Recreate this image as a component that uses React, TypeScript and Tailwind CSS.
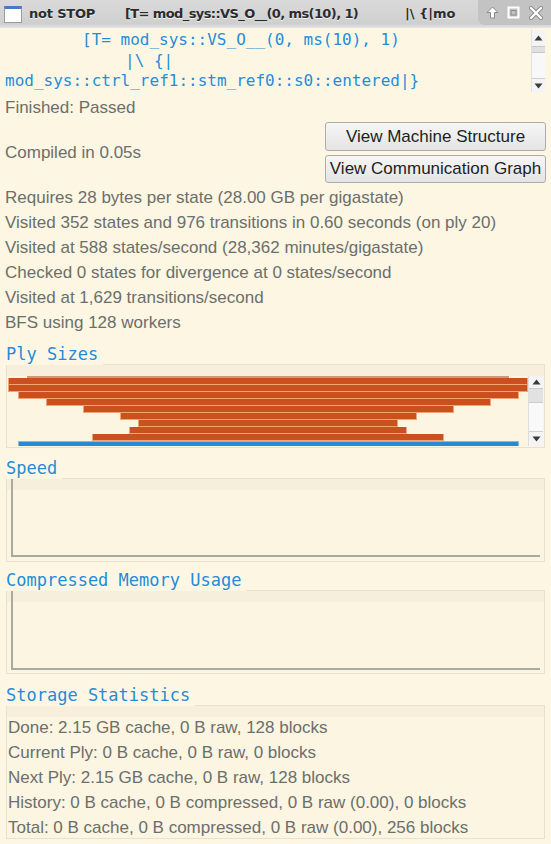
import React from "react";

const SANS = "font-['Liberation_Sans',Arial,sans-serif]";
const MONO = "font-['DejaVu_Sans_Mono',monospace]";

const BARS: { w: number; kind: "thin" | "bar" | "blue" }[] = [
  { w: 482, kind: "thin" },
  { w: 520, kind: "bar" },
  { w: 520, kind: "bar" },
  { w: 501, kind: "bar" },
  { w: 445, kind: "bar" },
  { w: 371, kind: "bar" },
  { w: 297, kind: "bar" },
  { w: 260, kind: "bar" },
  { w: 278, kind: "bar" },
  { w: 352, kind: "bar" },
  { w: 501, kind: "blue" },
];

const STATS = [
  "Requires 28 bytes per state (28.00 GB per gigastate)",
  "Visited 352 states and 976 transitions in 0.60 seconds (on ply 20)",
  "Visited at 588 states/second (28,362 minutes/gigastate)",
  "Checked 0 states for divergence at 0 states/second",
  "Visited at 1,629 transitions/second",
  "BFS using 128 workers",
];

const STORAGE = [
  "Done: 2.15 GB cache, 0 B raw, 128 blocks",
  "Current Ply: 0 B cache, 0 B raw, 0 blocks",
  "Next Ply: 2.15 GB cache, 0 B raw, 128 blocks",
  "History: 0 B cache, 0 B compressed, 0 B raw (0.00), 0 blocks",
  "Total: 0 B cache, 0 B compressed, 0 B raw (0.00), 256 blocks",
];

function Up() {
  return (
    <svg width="9" height="6" viewBox="0 0 9 6">
      <path d="M4.5 0.5 L8.5 5.5 L0.5 5.5 Z" fill="#3a3a3a" />
    </svg>
  );
}

function Down() {
  return (
    <svg width="9" height="6" viewBox="0 0 9 6">
      <path d="M0.5 0.5 L8.5 0.5 L4.5 5.5 Z" fill="#3a3a3a" />
    </svg>
  );
}

function Heading({ children }: { children: React.ReactNode }) {
  return (
    <div className={`${MONO} relative z-10 w-fit h-[21px] -mb-px pr-[5px] bg-[#fdf6e3] text-[17px] leading-[20px] text-[#268bd2] whitespace-nowrap [text-shadow:0_0_3px_#ffffff]`}>
      {children}
    </div>
  );
}

function Group({ className, children }: { className: string; children?: React.ReactNode }) {
  return (
    <div className={`relative border border-[#e9e1cb] bg-[#fcf5e2] ${className}`}>
      <div className="absolute left-0 right-0 top-0 h-[11px] bg-[#f7efdb]" />
      <div className="relative h-full">{children}</div>
    </div>
  );
}

function Axes({ top }: { top: string }) {
  return (
    <div className={`ml-[4px] mr-[4px] ${top} h-[64px] border-l-2 border-b-2 border-[#a9aa9b]`} />
  );
}

export default function App() {
  return (
    <div className={`${SANS} w-[551px] h-[844px] overflow-hidden bg-[#fdf6e3] text-[#6b6f6b]`}>
      {/* Title bar */}
      <div className="relative h-[28px] bg-[linear-gradient(#dadada,#cfcfcf_85%,#e6e6e6)] flex items-center font-['DejaVu_Sans',sans-serif] font-bold text-[13px] text-[#2b2b2b] [text-shadow:0_1px_0_#f2f2f2] whitespace-nowrap overflow-hidden">
        <div className="shrink-0 ml-[4px] w-[18px] h-[17px] bg-white border border-[#9a9a9a] border-t-[3px] border-t-[#4a78c2]" />
        <span className="ml-[7px] tracking-[-0.2px]">not STOP</span>
        <span className="absolute left-[125px] tracking-[-0.6px]">[T= mod_sys::VS_O__(0, ms(10), 1)</span>
        <span className="absolute left-[405px]">|\ {"{"}|mo</span>
        <div className="absolute right-0 top-0 w-[73px] h-[25px] bg-[#c3c3c3] rounded-bl-[7px] flex items-center justify-around px-[4px]">
          <svg width="13" height="13" viewBox="0 0 13 13">
            <path d="M6.5 1 L12 6.5 L8.5 6.5 L8.5 12 L4.5 12 L4.5 6.5 L1 6.5 Z" fill="#ffffff" stroke="#8a8a8a" strokeWidth="1" />
          </svg>
          <svg width="13" height="13" viewBox="0 0 13 13">
            <rect x="1.5" y="1.5" width="10" height="10" fill="none" stroke="#ffffff" strokeWidth="2" />
            <rect x="4" y="4.5" width="5" height="4.5" fill="none" stroke="#8a8a8a" strokeWidth="1" />
          </svg>
          <svg width="14" height="14" viewBox="0 0 14 14">
            <path d="M2 2 L12 12 M12 2 L2 12" stroke="#8a8a8a" strokeWidth="4" strokeLinecap="round" />
            <path d="M2 2 L12 12 M12 2 L2 12" stroke="#ffffff" strokeWidth="2.2" strokeLinecap="round" />
          </svg>
        </div>
      </div>

      {/* Formula text area */}
      <div className="flex h-[64px] pr-[6px]">
        <div className={`${MONO} flex-1 pt-[2px] pl-[5px] text-[16px] leading-[20.5px] text-[#268bd2] whitespace-pre [text-shadow:0_0_2px_#ffffff]`}>
          <div className="pl-[77px]">[T= mod_sys::VS_O__(0, ms(10), 1)</div>
          <div className="pl-[120px]">|\ {"{"}|</div>
          <div>mod_sys::ctrl_ref1::stm_ref0::s0::entered|{"}"}</div>
        </div>
        <div className="w-[14px] mt-[2px] bg-[#f4f4f4] border-l border-[#e2e2e2] flex flex-col">
          <div className="h-[16px] flex items-center justify-center"><Up /></div>
          <div className="h-[7px] bg-[#e0e0e0] border-y border-[#c8c8c8]" />
          <div className="flex-1 bg-[#f8f8f8]" />
          <div className="h-[14px] border-t border-[#cfcfcf] flex items-center justify-center"><Down /></div>
        </div>
      </div>

      {/* Status */}
      <div className="pl-[5px] pr-[5px] text-[17px]">
        <div className="mt-[3px] h-[25px] leading-[25px]">Finished: Passed</div>
        <div className="flex items-center justify-between pt-[2px] pb-[2px]">
          <div>Compiled in 0.05s</div>
          <div className="flex flex-col gap-[4px] w-[221px]">
            <button className="h-[29px] rounded-[3px] border border-[#acacac] bg-[linear-gradient(#f6f6f6,#e4e4e4)] text-[#1e1e1e] text-[17px] whitespace-nowrap">
              View Machine Structure
            </button>
            <button className="h-[28px] rounded-[3px] border border-[#acacac] bg-[linear-gradient(#f6f6f6,#e4e4e4)] text-[#1e1e1e] text-[17px] whitespace-nowrap">
              View Communication Graph
            </button>
          </div>
        </div>
        {STATS.map(s => (
          <div key={s} className="h-[25px] leading-[25px] whitespace-nowrap">{s}</div>
        ))}
      </div>

      <div className="pl-[6px] pr-[6px]">
        {/* Ply sizes */}
        <div className="mt-[9px]">
          <Heading>Ply Sizes</Heading>
          <Group className="h-[84px]">
            <div className="flex pt-[11px] pl-px">
              <div className="w-[520px] h-[70px] flex flex-col items-center overflow-hidden">
                {BARS.map((b, i) => {
                  if (b.kind === "thin")
                    return <div key={i} className="h-[2px] bg-[#c69c78] shrink-0" style={{ width: b.w }} />;
                  if (b.kind === "blue")
                    return <div key={i} className="h-[6px] bg-[#268bd2] border border-[#79bde9] shrink-0" style={{ width: b.w }} />;
                  return <div key={i} className="h-[7px] bg-[#c8511e] border-x border-b border-[#f5a171] shrink-0" style={{ width: b.w }} />;
                })}
              </div>
              <div className="w-[15px] h-[70px] bg-[#f4f4f4] border-l border-[#dedede] flex flex-col">
                <div className="h-[12px] flex items-center justify-center"><Up /></div>
                <div className="h-[15px] bg-[#e2e2e2] border-y border-[#cccccc]" />
                <div className="flex-1 bg-[#f9f9f9]" />
                <div className="h-[15px] border-t border-[#cfcfcf] flex items-center justify-center"><Down /></div>
              </div>
            </div>
          </Group>
        </div>

        {/* Speed */}
        <div className="mt-[10px]">
          <Heading>Speed</Heading>
          <Group className="h-[84px]">
            <Axes top="pt-[12px] box-content" />
          </Group>
        </div>

        {/* Compressed memory */}
        <div className="mt-[8px]">
          <Heading>Compressed Memory Usage</Heading>
          <Group className="h-[84px]">
            <Axes top="pt-[13px] box-content" />
          </Group>
        </div>

        {/* Storage */}
        <div className="mt-[11px]">
          <Heading>Storage Statistics</Heading>
          <Group className="h-[134px]">
            <div className="pt-[9px] pl-px text-[17px]">
              {STORAGE.map(s => (
                <div key={s} className="h-[25px] leading-[25px] whitespace-nowrap">{s}</div>
              ))}
            </div>
          </Group>
        </div>
      </div>
    </div>
  );
}
